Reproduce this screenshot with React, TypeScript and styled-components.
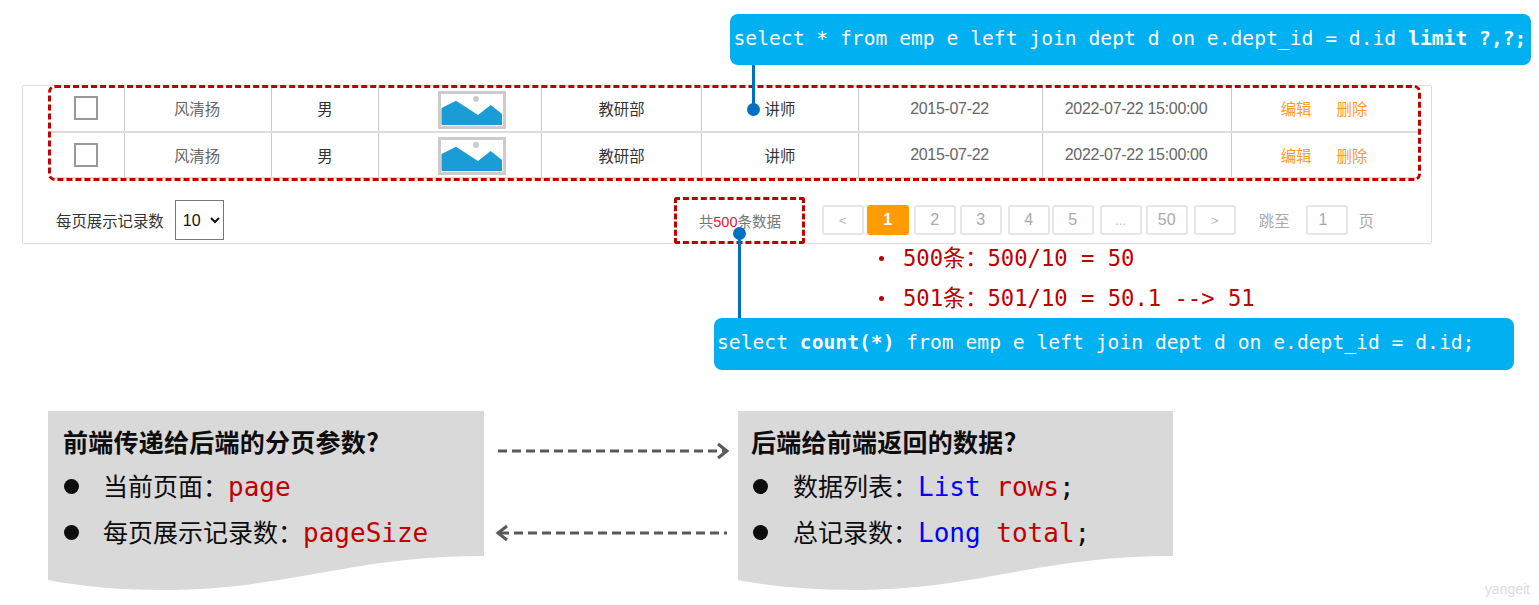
import React from 'react'
import styled, { createGlobalStyle } from 'styled-components'

const MONO = '"DejaVu Sans Mono", "Noto Sans CJK SC", monospace'
const SANS = '"Liberation Sans", "Noto Sans CJK SC", sans-serif'
const CJK = '"Noto Sans CJK SC", sans-serif'

const COLUMNS = '75px 147px 107px 163px 160px 157px 184px 189px 187px'

const pages = [
  { label: '<', gap: 0, muted: true },
  { label: '1', gap: 3, active: true },
  { label: '2', gap: 5 },
  { label: '3', gap: 4 },
  { label: '4', gap: 6 },
  { label: '5', gap: 2 },
  { label: '...', gap: 6, muted: true },
  { label: '50', gap: 4 },
  { label: '>', gap: 6, muted: true },
]

const ImagePlaceholder = () => (
  <Picture width="68" height="38" viewBox="0 0 68 38">
    <rect x="1.5" y="1.5" width="65" height="35" fill="#fff" stroke="#ccc" strokeWidth="3" />
    <path d="M3.5 17L18 9.7L40 24L52.7 14L64 23V34H3.5Z" fill="#1a9cd6" />
    <circle cx="38" cy="8" r="3" fill="#ccc" />
  </Picture>
)

const Row = () => (
  <TableRow>
    <Cell><Checkbox /></Cell>
    <NameCell>风清扬</NameCell>
    <Cell $dark>男</Cell>
    <Cell><ImagePlaceholder /></Cell>
    <Cell $dark>教研部</Cell>
    <Cell $dark>讲师</Cell>
    <DateCell>2015-07-22</DateCell>
    <DateCell>2022-07-22 15:00:00</DateCell>
    <Cell $last>
      <Actions>
        <span>编辑</span>
        <span>删除</span>
      </Actions>
    </Cell>
  </TableRow>
)

const App = () => (
  <Page>
    <GlobalStyle />
    <TopCallout>
      select * from emp e left join dept d on e.dept_id = d.id <b>limit ?,?;</b>
    </TopCallout>

    <Panel>
      <TopStem />
      <TopDot />
      <Row />
      <Row />
      <Footer>
        <SizeLabel>每页展示记录数</SizeLabel>
        <SizeSelect defaultValue="10">
          <option value="10">10</option>
          <option value="20">20</option>
        </SizeSelect>
        <Total>
          共<em>500</em>条数据
        </Total>
        <Pager>
          {pages.map((p) => (
            <PageButton key={p.label} $gap={p.gap} $active={p.active} $muted={p.muted}>
              {p.label}
            </PageButton>
          ))}
        </Pager>
        <JumpLabel>跳至</JumpLabel>
        <JumpInput>1</JumpInput>
        <PageWord>页</PageWord>
      </Footer>
      <TableMark />
      <TotalMark />
      <BottomStem />
      <BottomDot />
    </Panel>

    <Notes>
      <Note>500条：500/10 = 50</Note>
      <Note>501条：501/10 = 50.1 --&gt; 51</Note>
    </Notes>

    <BottomCallout>
      select <b>count(*)</b> from emp e left join dept d on e.dept_id = d.id;
    </BottomCallout>

    <Exchange>
      <Sheet>
        <SheetTitle>前端传递给后端的分页参数?</SheetTitle>
        <SheetLine>
          <span>当前页面：<Code $red>page</Code></span>
        </SheetLine>
        <SheetLine>
          <span>每页展示记录数：<Code $red>pageSize</Code></span>
        </SheetLine>
      </Sheet>

      <Arrows>
        <svg width="254" height="18" viewBox="0 0 254 18">
          <path d="M14 9H240" stroke="#595959" strokeWidth="3" strokeDasharray="9 5" fill="none" />
          <path d="M234 2L243 9L234 16" stroke="#595959" strokeWidth="3" fill="none" />
        </svg>
        <svg width="254" height="18" viewBox="0 0 254 18">
          <path d="M16 9H243" stroke="#595959" strokeWidth="3" strokeDasharray="9 5" fill="none" />
          <path d="M23 2L14 9L23 16" stroke="#595959" strokeWidth="3" fill="none" />
        </svg>
      </Arrows>

      <Sheet $second>
        <SheetTitle>后端给前端返回的数据?</SheetTitle>
        <SheetLine $indent>
          <span>数据列表：<Code $blue>List </Code><Code $red>rows</Code><Code>;</Code></span>
        </SheetLine>
        <SheetLine $indent>
          <span>总记录数：<Code $blue>Long </Code><Code $red>total</Code><Code>;</Code></span>
        </SheetLine>
      </Sheet>
    </Exchange>

    <Watermark>yangeit</Watermark>
  </Page>
)

const GlobalStyle = createGlobalStyle`
  html, body {
    margin: 0;
    background: #fff;
  }
`

const Page = styled.div`
  position: relative;
  box-sizing: border-box;
  height: 605px;
  padding-top: 14px;
  overflow: hidden;
`

const Callout = styled.div`
  box-sizing: border-box;
  background: #00b0f0;
  border-radius: 8px;
  color: #fff;
  font-family: ${MONO};
  font-size: 19.66px;
  white-space: pre-wrap;
`

const TopCallout = styled(Callout)`
  width: 801px;
  height: 51px;
  margin-left: 730px;
  padding-left: 3.5px;
  line-height: 50px;
`

const BottomCallout = styled(Callout)`
  width: 800px;
  height: 52px;
  margin: 7px 0 0 714px;
  padding-left: 3px;
  line-height: 49px;
`

const Panel = styled.div`
  position: relative;
  box-sizing: border-box;
  width: 1410px;
  height: 159px;
  margin: 20px 0 0 22px;
  padding-left: 27px;
  border: 1px solid #ddd;
  border-radius: 2px;
`

const TableRow = styled.div`
  display: grid;
  grid-template-columns: ${COLUMNS};
  width: 1369px;
  height: 46.5px;
  border-bottom: 2px solid #ddd;
  box-sizing: border-box;
`

const Cell = styled.div<{ $dark?: boolean; $last?: boolean }>`
  display: flex;
  align-items: center;
  justify-content: center;
  border-right: ${(p) => (p.$last ? 'none' : '1px solid #ccc')};
  color: ${(p) => (p.$dark ? '#333' : '#666')};
  font-family: ${SANS};
  font-size: 15.4px;
`

const NameCell = styled(Cell)`
  padding-right: 2px;
`

const DateCell = styled(Cell)`
  padding: 1px 2px 0 0;
  font-size: 16px;
  letter-spacing: -0.32px;
`

const Picture = styled.svg`
  margin: 3px 0 0 24px;
`

const Checkbox = styled.div`
  box-sizing: border-box;
  width: 24px;
  height: 24px;
  margin-right: 3px;
  border: 2px solid #999;
`

const Actions = styled.div`
  display: flex;
  gap: 25px;
  margin-right: 3px;
  color: #ff9a2e;
`

const Footer = styled.div`
  display: flex;
  align-items: center;
  margin-left: -27px;
  padding: 21px 0 0 33px;
  font-family: ${SANS};
`

const SizeLabel = styled.span`
  margin-right: 11px;
  color: #333;
  font-size: 15.4px;
`

const SizeSelect = styled.select`
  box-sizing: border-box;
  width: 49px;
  height: 40px;
  padding: 0 0 0 3px;
  background: #fff;
  border: 1px solid #767676;
  border-radius: 0;
  color: #111;
  font-family: ${SANS};
  font-size: 16px;
`

const Total = styled.span`
  margin-left: 475px;
  width: 82px;
  color: #777;
  font-size: 14.5px;
  white-space: nowrap;

  em {
    color: #e0203c;
    font-style: normal;
  }
`

const Pager = styled.div`
  display: flex;
  margin-left: 41px;
`

const PageButton = styled.div<{ $gap: number; $active?: boolean; $muted?: boolean }>`
  display: flex;
  align-items: center;
  justify-content: center;
  box-sizing: border-box;
  width: 42px;
  height: 30px;
  margin-left: ${(p) => p.$gap}px;
  border: ${(p) => (p.$active ? 'none' : '2px solid #e6e6e6')};
  border-radius: 3px;
  background: ${(p) => (p.$active ? '#ff9c00' : '#fff')};
  color: ${(p) => (p.$active ? '#fff' : p.$muted ? '#bbb' : '#aaa')};
  font-size: ${(p) => (p.$muted ? '13px' : '16px')};
  font-weight: ${(p) => (p.$active ? 700 : 400)};
`

const JumpLabel = styled.span`
  margin-left: 23px;
  color: #aaa;
  font-size: 15.4px;
`

const JumpInput = styled.div`
  box-sizing: border-box;
  width: 42px;
  height: 30px;
  margin-left: 16px;
  padding-left: 11px;
  border: 2px solid #e6e6e6;
  border-radius: 3px;
  color: #aaa;
  font-size: 16px;
  line-height: 26px;
`

const PageWord = styled.span`
  margin-left: 11px;
  color: #aaa;
  font-size: 15.4px;
`

const TableMark = styled.div`
  position: absolute;
  left: 25px;
  top: -1px;
  box-sizing: border-box;
  width: 1373px;
  height: 96px;
  border: 3px dashed #c00000;
  border-radius: 7px;
`

const TotalMark = styled.div`
  position: absolute;
  left: 651px;
  top: 111px;
  box-sizing: border-box;
  width: 131px;
  height: 47px;
  border: 3px dashed #c00000;
  border-radius: 3px;
`

const Stem = styled.div`
  position: absolute;
  width: 3px;
  background: #0070c0;
`

const Dot = styled.div`
  position: absolute;
  width: 13px;
  height: 13px;
  border-radius: 50%;
  background: #0070c0;
`

const TopStem = styled(Stem)`
  left: 729px;
  top: -21px;
  height: 45px;
  z-index: 1;
`

const TopDot = styled(Dot)`
  left: 724px;
  top: 17px;
`

const BottomStem = styled(Stem)`
  left: 715px;
  top: 148px;
  height: 84px;
`

const BottomDot = styled(Dot)`
  left: 710px;
  top: 141px;
`

const Notes = styled.ul`
  display: flex;
  flex-direction: column;
  gap: 10px;
  margin: -3px 0 0 876px;
  padding: 0;
  list-style: none;
`

const Note = styled.li`
  display: flex;
  align-items: center;
  height: 30px;
  color: #c00000;
  font-family: ${MONO};
  font-size: 22.2px;
  white-space: pre;

  &::before {
    content: '';
    width: 5px;
    height: 5px;
    margin: 4px 19px 0 3px;
    border-radius: 50%;
    background: #c00000;
  }
`

const Exchange = styled.div`
  display: flex;
  margin: 41px 0 0 48px;
`

const Sheet = styled.div<{ $second?: boolean }>`
  box-sizing: border-box;
  width: ${(p) => (p.$second ? 435 : 436)}px;
  height: 179px;
  padding: 14px 0 0 ${(p) => (p.$second ? 13 : 15)}px;
  background: #d9d9d9;
  clip-path: path('M0 0H436V145C300 145 240 179 115 179C70 179 30 175 0 169Z');
  color: #0d0d0d;
  font-family: ${CJK};
`

const SheetTitle = styled.div`
  height: 32px;
  margin-bottom: 5px;
  font-size: 25px;
  font-weight: 700;
  letter-spacing: 0.25px;
  line-height: 32px;
  white-space: nowrap;
`

const SheetLine = styled.div<{ $indent?: boolean }>`
  display: flex;
  align-items: center;
  height: 46px;
  font-size: 25px;
  white-space: pre;

  &::before {
    content: '';
    flex: none;
    width: 15px;
    height: 15px;
    margin: 2px ${(p) => (p.$indent ? 25 : 24)}px 0 ${(p) => (p.$indent ? 2 : 1)}px;
    border-radius: 50%;
    background: #0d0d0d;
  }
`

const Code = styled.span<{ $red?: boolean; $blue?: boolean }>`
  color: ${(p) => (p.$red ? '#c00000' : p.$blue ? '#0000ff' : '#0d0d0d')};
  font-family: ${MONO};
  font-size: 26px;
`

const Arrows = styled.div`
  display: flex;
  flex-direction: column;
  gap: 64px;
  width: 254px;
  padding-top: 31px;
`

const Watermark = styled.div`
  position: absolute;
  right: 9px;
  bottom: 8px;
  color: #dcdcdc;
  font-family: ${SANS};
  font-size: 14px;
`

export default App
